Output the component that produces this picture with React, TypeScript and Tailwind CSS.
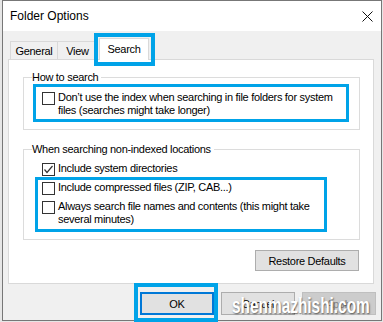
import React from "react";

function Box({ checked = false }: { checked?: boolean }) {
  return (
    <span className="mt-[1px] w-[13px] h-[13px] shrink-0 border border-[#333333] bg-white flex items-center justify-center">
      {checked && (
        <svg width="11" height="11" viewBox="0 0 11 11">
          <polyline points="1.5,5.5 4,8.5 9.5,2" fill="none" stroke="#333333" strokeWidth="1.2" />
        </svg>
      )}
    </span>
  );
}

function Item({ checked = false, children }: { checked?: boolean; children: React.ReactNode }) {
  return (
    <div className="flex items-start gap-[3px] leading-[13px] whitespace-nowrap">
      <Box checked={checked} />
      <span>{children}</span>
    </div>
  );
}

export default function App() {
  return (
    <div className="w-[383px] h-[322px] bg-[#e6e6e6] overflow-hidden relative font-['Segoe_UI','Liberation_Sans',sans-serif] text-[11px] tracking-[-0.3px] text-black">
      <div className="ml-[2px] w-[380px] h-[321px] border border-[#777777] bg-[#f0f0f0] flex flex-col">
        {/* title bar */}
        <div className="h-[30px] bg-white flex items-center justify-between pl-[7px] pr-[8px] shrink-0">
          <span className="text-[12px] tracking-normal leading-[14px]">Folder Options</span>
          <svg width="11" height="11" viewBox="0 0 11 11">
            <line x1="0.5" y1="0.5" x2="10.5" y2="10.5" stroke="#111" strokeWidth="1" />
            <line x1="10.5" y1="0.5" x2="0.5" y2="10.5" stroke="#111" strokeWidth="1" />
          </svg>
        </div>

        {/* tabs */}
        <div className="pt-[7px] pl-[5px]">
          <div className="flex items-end pl-[2px] h-[21px]">
            <div className="h-[18px] w-[48px] border border-b-0 border-[#d9d9d9] bg-[#f0f0f0] flex items-center justify-center leading-[14px]">
              General
            </div>
            <div className="h-[18px] w-[41px] -ml-px border border-b-0 border-[#d9d9d9] bg-[#f0f0f0] flex items-center justify-center leading-[14px]">
              View
            </div>
            <div className="relative z-10 h-[22px] w-[50px] ml-[1px] -mb-px border border-b-0 border-[#d9d9d9] bg-white flex items-center justify-center leading-[14px] pb-[2px]">
              Search
              <span className="absolute -left-[6px] -right-[7px] -top-[6px] -bottom-[6px] border-[4px] border-[#00a3e8]" />
            </div>
          </div>

          {/* panel */}
          <div className="w-[366px] h-[225px] border border-[#d9d9d9] bg-white flex flex-col">
            <fieldset className="mt-[10px] ml-[14px] mr-[13px] border border-[#dcdcdc] pb-[7px]">
              <legend className="ml-[8px] pr-[3px] leading-[14px]">How to search</legend>
              <div className="ml-[9px] w-[316px] h-[38px] border-[3px] border-[#00a3e8] pt-[4px] pl-[6px]">
                <Item>
                  Don’t use the index when searching in file folders for system
                  <br />
                  files (searches might take longer)
                </Item>
              </div>
            </fieldset>

            <fieldset className="mt-[12px] ml-[14px] mr-[13px] border border-[#dcdcdc] pb-[7px]">
              <legend className="ml-[8px] pr-[3px] leading-[14px]">When searching non-indexed locations</legend>
              <div className="mt-[6px] ml-[18px]">
                <Item checked>Include system directories</Item>
              </div>
              <div className="mt-[1px] ml-[11px] w-[292px] border-[3px] border-[#00a3e8] pt-[1px] pb-[3px] pl-[4px] flex flex-col gap-[5px]">
                <Item>Include compressed files (ZIP, CAB...)</Item>
                <Item>
                  Always search file names and contents (this might take
                  <br />
                  several minutes)
                </Item>
              </div>
            </fieldset>

            <div className="mt-[10px] mr-[14px] flex justify-end">
              <button className="w-[104px] h-[21px] border border-[#adadad] bg-[#e1e1e1] leading-[14px]">
                Restore Defaults
              </button>
            </div>
          </div>
        </div>

        {/* bottom buttons */}
        <div className="pt-[8px] pr-[5px] flex justify-end gap-[7px]">
          <div className="relative">
            <button className="w-[74px] h-[23px] border-2 border-[#0078d7] bg-[#e1e1e1] leading-[14px]">OK</button>
            <span className="absolute -left-[6px] -right-[4px] -top-[9px] -bottom-[7px] border-[4px] border-[#00a3e8]" />
          </div>
          <button className="w-[74px] h-[23px] border border-[#adadad] bg-[#e1e1e1] leading-[14px]">Cancel</button>
          <button className="w-[74px] h-[23px] border border-[#bfbfbf] bg-[#cccccc] text-[#838383] leading-[14px]">Apply</button>
        </div>
      </div>

      {/* watermark */}
      <div className="absolute left-[232px] top-[294px] whitespace-nowrap origin-left scale-x-[0.7] text-white font-bold text-[22px] tracking-normal leading-[24px] font-['Liberation_Sans',sans-serif] [text-shadow:1px_1px_2px_rgba(0,0,0,0.6)]">
        shenmazhishi.com
      </div>
    </div>
  );
}
